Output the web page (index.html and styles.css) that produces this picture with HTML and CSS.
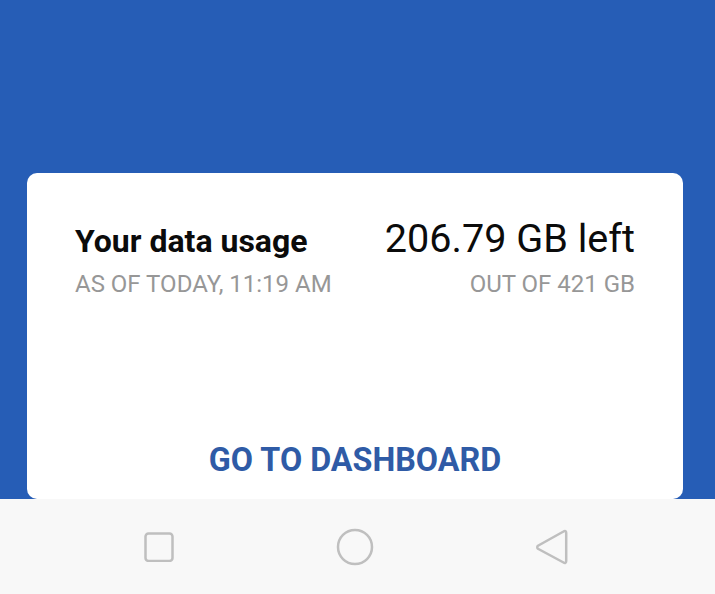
FILE: index.html
```html
<!DOCTYPE html>
<html lang="en">
<head>
  <meta charset="UTF-8">
  <title>Data usage</title>
  <link rel="stylesheet" href="styles.css">
</head>
<body>
  <main class="main">
    <section class="card">
      <div class="usage-row">
        <div class="usage-left">
          <h2 class="usage-title">Your data usage</h2>
          <p class="usage-note">AS OF TODAY, 11:19 AM</p>
        </div>
        <div class="usage-right">
          <div class="usage-value">206.79 GB left</div>
          <p class="usage-note">OUT OF 421 GB</p>
        </div>
      </div>
      <a class="dashboard-link" href="#">GO TO DASHBOARD</a>
    </section>
  </main>

  <nav class="nav-bar">
    <svg class="nav-icon" width="30" height="30" viewBox="0 0 30 30">
      <rect x="1.5" y="1.5" width="27" height="27.5" rx="3"/>
    </svg>
    <svg class="nav-icon" width="38" height="38" viewBox="0 0 38 38">
      <circle cx="19" cy="19" r="17"/>
    </svg>
    <svg class="nav-icon" width="32" height="38" viewBox="0 0 32 38">
      <path d="M27.500 3.500 C29 2.500 30.200 3 30.200 5 V33 C30.200 35 29 35.500 27.500 34.500 L2 20.800 C1 20 1 18.500 2 17.700 Z"/>
    </svg>
  </nav>
</body>
</html>
```

FILE: styles.css
```css
body {
  margin: 0;
  width: 715px;
  height: 594px;
  overflow: hidden;
  display: flex;
  flex-direction: column;
  font-family: Roboto, "Liberation Sans", sans-serif;
  background-color: #f8f8f8;
}

.main {
  height: 499px;
  box-sizing: border-box;
  padding: 173px 32px 0 27px;
  background-color: #265db6;
}

.card {
  height: 326px;
  box-sizing: border-box;
  padding: 46px 48px 0;
  display: flex;
  flex-direction: column;
  background-color: #fff;
  border-radius: 10px;
}

.usage-row {
  display: flex;
  justify-content: space-between;
}

.usage-right {
  text-align: right;
}

.usage-title {
  margin: 0;
  height: 46px;
  line-height: 44px;
  font-size: 32px;
  font-weight: 700;
  color: #0b0b0b;
}

.usage-value {
  height: 46px;
  line-height: 40px;
  font-size: 39.600px;
  color: #0b0b0b;
}

.usage-note {
  margin: 0;
  padding-top: 2px;
  line-height: 34px;
  font-size: 24px;
  color: #979797;
}

.dashboard-link {
  margin-top: auto;
  padding-bottom: 19px;
  line-height: 40px;
  text-align: center;
  font-size: 32.300px;
  font-weight: 700;
  color: #2f5ba6;
  text-decoration: none;
}

.nav-bar {
  height: 95px;
  display: flex;
  align-items: center;
  padding-left: 144px;
  gap: 162px;
}

.nav-icon {
  fill: none;
  stroke: #bfbfbf;
  stroke-width: 2.5;
}
```
